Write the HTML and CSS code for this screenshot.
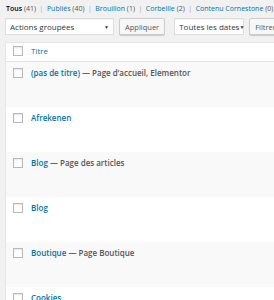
FILE: index.html
```html
<!DOCTYPE html>
<html lang="fr">

<head>
  <meta charset="UTF-8">
  <meta name="viewport" content="width=device-width, initial-scale=1.0">
  <title>Pages</title>
  <link rel="stylesheet" href="styles.css">
</head>

<body>
  <div class="wrap">
    <ul class="subsubsub">
      <li class="current">Tous <span class="count">(41)</span></li>
      <li class="sep">|</li>
      <li><a href="#">Publiés</a> <span class="count">(40)</span></li>
      <li class="sep">|</li>
      <li><a href="#">Brouillon</a> <span class="count">(1)</span></li>
      <li class="sep">|</li>
      <li><a href="#">Corbeille</a> <span class="count">(2)</span></li>
      <li class="sep">|</li>
      <li><a href="#">Contenu Cornestone</a> <span class="count">(0)</span></li>
    </ul>

    <div class="tablenav">
      <div class="select bulk">Actions groupées <span class="arrow">▼</span></div>
      <button class="button">Appliquer</button>
      <div class="select dates">Toutes les dates <span class="arrow">▼</span></div>
      <button class="button">Filtrer</button>
    </div>

    <div class="list">
      <div class="row head">
        <span class="check"></span>
        <a href="#" class="col-title">Titre</a>
      </div>
      <div class="row alt">
        <span class="check"></span>
        <div class="title"><a href="#">(pas de titre)</a> <span class="state">— Page d’accueil, Elementor</span></div>
      </div>
      <div class="row">
        <span class="check"></span>
        <div class="title"><a href="#">Afrekenen</a></div>
      </div>
      <div class="row alt">
        <span class="check"></span>
        <div class="title"><a href="#">Blog</a> <span class="state">— Page des articles</span></div>
      </div>
      <div class="row">
        <span class="check"></span>
        <div class="title"><a href="#">Blog</a></div>
      </div>
      <div class="row alt">
        <span class="check"></span>
        <div class="title"><a href="#">Boutique</a> <span class="state">— Page Boutique</span></div>
      </div>
      <div class="row">
        <span class="check"></span>
        <div class="title"><a href="#">Cookies</a></div>
      </div>
    </div>
  </div>
</body>

</html>
```

FILE: styles.css
```css
body {
  margin: 0;
  background: #f1f1f1;
  font-family: "Open Sans", Arial, sans-serif;
  font-size: 7.5px;
  color: #555;
  overflow: hidden;
}

a {
  color: #0073aa;
  text-decoration: none;
}

.wrap {
  padding-left: 5px;
  width: 320px;
}

/* filtres en haut */
.subsubsub {
  display: flex;
  gap: 3.5px;
  margin: 0;
  padding: 3px 0 0 1px;
  list-style: none;
  height: 11px;
  line-height: 11px;
  font-size: 7px;
  white-space: nowrap;
}

.subsubsub .current {
  color: #000;
  font-weight: 600;
}

.subsubsub .count {
  color: #555;
  font-weight: 400;
}

.subsubsub .sep {
  color: #aaa;
}

/* barre d'actions */
.tablenav {
  display: flex;
  align-items: center;
  gap: 5px;
  margin-top: 4px;
  height: 17px;
  white-space: nowrap;
}

.select {
  box-sizing: border-box;
  height: 17px;
  display: flex;
  align-items: center;
  justify-content: space-between;
  padding: 0 4px 0 4px;
  background: #fff;
  border: 1px solid #ddd;
  color: #32373c;
  font-size: 8px;
  box-shadow: inset 0 1px 1px rgba(0, 0, 0, 0.05);
}

.select .arrow {
  font-size: 5px;
  color: #333;
}

.select.bulk {
  width: 109px;
}

.select.dates {
  width: 70px;
  margin-left: 4px;
}

.button {
  box-sizing: border-box;
  height: 17px;
  padding: 0 5px;
  background: #f7f7f7;
  border: 1px solid #ccc;
  border-radius: 2px;
  color: #555;
  font-family: inherit;
  font-size: 7.5px;
  box-shadow: 0 1px 0 #ccc;
}

/* tableau */
.list {
  margin-top: 7px;
  background: #fff;
  border: 1px solid #e5e5e5;
  border-right: 0;
}

.row {
  display: flex;
  align-items: flex-start;
  height: 45px;
  padding: 6px 0 0 7px;
  box-sizing: border-box;
}

.row.alt {
  background: #f9f9f9;
}

.row.head {
  height: 19px;
  padding-top: 3px;
  border-bottom: 1px solid #e1e1e1;
}

.check {
  flex: none;
  box-sizing: border-box;
  width: 10px;
  height: 10px;
  background: #fff;
  border: 1px solid #b4b9be;
  box-shadow: inset 0 1px 2px rgba(0, 0, 0, 0.1);
}

.col-title {
  margin-left: 8px;
  line-height: 10px;
  font-size: 8px;
}

.title {
  margin-left: 8px;
  line-height: 10px;
  font-size: 8px;
  font-weight: 600;
  white-space: nowrap;
}

.title .state {
  color: #555;
}
```
